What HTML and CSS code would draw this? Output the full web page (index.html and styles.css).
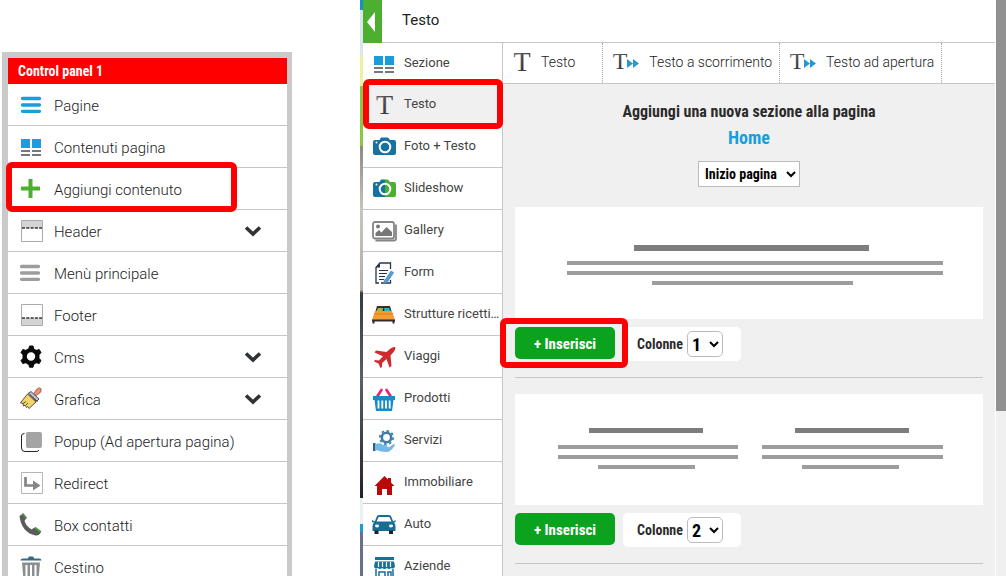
FILE: index.html
```html
<!DOCTYPE html>
<html lang="it">
<head>
<meta charset="utf-8">
<title>Control panel</title>
<link rel="stylesheet" href="styles.css">
</head>
<body>
<div class="page">
  <nav class="control-panel">
    <h2 class="panel-title">Control panel 1</h2>
    <ul class="menu">
      <li><a href="#"><svg class="icon" viewBox="0 0 26 26"><path d="M4.500 6.500h17M4.500 13h17M4.500 19.300h17" stroke="#179edb" stroke-width="3.300" stroke-linecap="round"/></svg><span>Pagine</span></a></li>
      <li><a href="#"><svg class="icon" viewBox="0 0 26 26"><path d="M3 5h9v9H3zM14 5h9v9h-9z" fill="#179edb"/><path d="M3 17h9M14 17h9M3 21h9M14 21h9" stroke="#777" stroke-width="2"/></svg><span>Contenuti pagina</span></a></li>
      <li class="marked marked-add"><a href="#"><svg class="icon" viewBox="0 0 26 26"><path d="M3 12.500h19M12.500 3v19" stroke="#4caf2f" stroke-width="4"/></svg><span>Aggiungi contenuto</span></a></li>
      <li><a href="#"><svg class="icon" viewBox="0 0 26 26"><path d="M3.500 2.500h21v21h-21z" fill="#fff" stroke="#aaa"/><path d="M4 3h20v7H4z" fill="#d4d4d4"/><path d="M4 10h20" stroke="#333" stroke-width="1.500" stroke-dasharray="3 1.300"/></svg><span>Header</span><svg class="chevron" viewBox="0 0 18 12"><path d="M2 2.500l7 6.500 7-6.500" fill="none" stroke="#2f3335" stroke-width="3.600"/></svg></a></li>
      <li><a href="#"><svg class="icon" viewBox="0 0 26 26"><path d="M3.500 6.500h17M3.500 13h17M3.500 19.300h17" stroke="#9d9d9d" stroke-width="3.300" stroke-linecap="round"/></svg><span>Menù principale</span></a></li>
      <li><a href="#"><svg class="icon" viewBox="0 0 26 26"><path d="M3.500 2.500h21v21h-21z" fill="#fff" stroke="#aaa"/><path d="M4 16h20v7H4z" fill="#d4d4d4"/><path d="M4 16h20" stroke="#333" stroke-width="1.500" stroke-dasharray="3 1.300"/></svg><span>Footer</span></a></li>
      <li><a href="#"><svg class="icon" viewBox="0 0 26 26"><circle cx="13" cy="12.500" r="6.400" fill="none" stroke="#0a0a0a" stroke-width="4.400"/><path d="M10.800 5l.7-3h3.500l.7 3zM10.800 20l.7 3.200h3.500l.7-3.200zM18 6.500l3.200-1 1.800 3.200-2.400 2.400zM20.600 14l2.400 2.400-1.800 3.200-3.200-1zM8 6.500l-3.200-1L3 8.700l2.400 2.400zM5.400 14L3 16.400l1.800 3.200 3.200-1z" fill="#0a0a0a" stroke="#0a0a0a" stroke-linejoin="round"/></svg><span>Cms</span><svg class="chevron" viewBox="0 0 18 12"><path d="M2 2.500l7 6.500 7-6.500" fill="none" stroke="#2f3335" stroke-width="3.600"/></svg></a></li>
      <li><a href="#"><svg class="icon" viewBox="0 0 26 26"><path d="M15.500 8l3-4.500q3.500-3 4.500-.5 1 3-2 4.500L17.500 10z" fill="#ee8d78" stroke="#8c5147" stroke-width=".8"/><path d="M10 7.500l3-2 8 7.500-2.500 2.500z" fill="#bcc3ca" stroke="#3c4146" stroke-width=".9"/><path d="M9.500 8l8.500 8-7 6.500-1.500-2-1 1-1.500-2.500L5.500 20 5 17.500l-2.500-.7z" fill="#f3d46a" stroke="#4a4437" stroke-width=".9"/><path d="M11.500 8l8 7.500M5 17.500l3-2M8 19l2-2" stroke="#444" stroke-width=".9"/></svg><span>Grafica</span><svg class="chevron" viewBox="0 0 18 12"><path d="M2 2.500l7 6.500 7-6.500" fill="none" stroke="#2f3335" stroke-width="3.600"/></svg></a></li>
      <li><a href="#"><svg class="icon" viewBox="0 0 26 26"><rect x="8" y="4" width="16" height="16" rx="2" fill="#a4a4a4"/><path d="M6.500 5.500Q3.500 5.500 3.500 8v12q0 3.500 3.500 3.500h11q2.500 0 3-1.500" fill="none" stroke="#222"/></svg><span>Popup (Ad apertura pagina)</span></a></li>
      <li><a href="#"><svg class="icon" viewBox="0 0 26 26"><path d="M3.500 2.500h21v21h-21z" fill="#fff" stroke="#b5b5b5"/><path d="M7.500 7v8.500H16" fill="none" stroke="#858585" stroke-width="2.700"/><path d="M15 10.500l7.500 5-7.500 5z" fill="#858585"/></svg><span>Redirect</span></a></li>
      <li><a href="#"><svg class="icon" viewBox="0 0 26 26"><path d="M1.500 4L5 1.500 8.500 6 6.500 9q2 5.500 7 8.500l3-2 6.500 4.500q-2 4-5.500 3.500Q3.500 20.500 1.500 4z" fill="#5b5b5b"/><path d="M4.500 1.500l4 4.500M17 15.500l6 4.500" stroke="#4c9d43" stroke-width="1.700"/></svg><span>Box contatti</span></a></li>
      <li><a href="#"><svg class="icon" viewBox="0 0 26 26"><path d="M2.500 6.500q0-2 3-2h4.500q0-2 1.500-2h3q1.500 0 1.500 2H21q2.500 0 2.500 2z" fill="#376a80"/><path d="M4 8.500h18L20.500 26h-15z" fill="#8b8f92"/><path d="M8.500 11v15M13 11v15M17.500 11v15" stroke="#fff" stroke-width="2"/></svg><span>Cestino</span></a></li>
    </ul>
  </nav>

  <div class="backdrop"></div>

  <main class="editor">
    <header class="editor-head">
      <button class="back" type="button" aria-label="Indietro"><svg viewBox="0 0 8 20"><path d="M8 0v20L0 10z" fill="#fff"/></svg></button>
      <h1>Testo</h1>
    </header>
    <div class="editor-body">
      <ul class="menu categories">
        <li><a href="#"><svg class="icon" viewBox="0 0 26 26"><path d="M3 6h9v9H3zM14 6h9v9h-9z" fill="#179edb"/><path d="M3 18h9M14 18h9M3 22h9M14 22h9" stroke="#777" stroke-width="2"/></svg><span>Sezione</span></a></li>
        <li class="marked marked-text"><a href="#"><svg class="icon" viewBox="0 0 26 26" aria-hidden="true"><text class="serif-t" x="13.500" y="22" font-size="28" text-anchor="middle">T</text></svg><span>Testo</span></a></li>
        <li><a href="#"><svg class="icon" viewBox="0 0 26 26"><path d="M4 6h4.500L10 3.500h7L19 6h4q2 0 2 2v11q0 2-2 2H4q-2 0-2-2V8q0-2 2-2z" fill="#16739f"/><circle cx="14" cy="13" r="5.300" fill="none" stroke="#fff" stroke-width="2"/><circle cx="5.500" cy="8.500" r="1" fill="#fff"/></svg><span>Foto + Testo</span></a></li>
        <li><a href="#"><svg class="icon" viewBox="0 0 26 26"><path d="M14 3.500h-4L8.500 6H4Q2 6 2 8v11q0 2 2 2h10z" fill="#16739f"/><path d="M14 3.500h3L19 6h4q2 0 2 2v11q0 2-2 2h-9z" fill="#4caf2f"/><circle cx="14" cy="13" r="5.300" fill="none" stroke="#fff" stroke-width="2"/><circle cx="5.500" cy="8.500" r="1" fill="#fff"/></svg><span>Slideshow</span></a></li>
        <li><a href="#"><svg class="icon" viewBox="0 0 26 26"><path d="M4.500 22.500H23q2 0 2-2V6.500" fill="none" stroke="#858585" stroke-width="1.800"/><rect x="2" y="4" width="21" height="16.500" rx="2" fill="#fff" stroke="#858585" stroke-width="1.800"/><circle cx="7" cy="8.500" r="2" fill="#777"/><path d="M4.500 18v-3l3.500-3 2.500 2.500L15.500 9l5.500 5v4z" fill="#777"/></svg><span>Gallery</span></a></li>
        <li><a href="#"><svg class="icon" viewBox="0 0 26 26"><path d="M19.500 9V3H9L5 7.500V23h3M10 23h9.500v-3" fill="none" stroke="#273451" stroke-width="1.300"/><path d="M4.500 7.500L9 2.500v5z" fill="#273451"/><path d="M8 10.500h9M8 13.500h8M8 16.500h6M8 19.500h5" stroke="#273451" stroke-width="1.200"/><path d="M15 21.500l6.500-10" stroke="#5c9bd2" stroke-width="4"/><path d="M13 19l3.500 2.500-4 2z" fill="#5c9bd2"/></svg><span>Form</span></a></li>
        <li><a href="#"><svg class="icon" viewBox="0 0 26 26"><path d="M6 4h13l2 7H4z" fill="#3c2d2c"/><path d="M7 6h5l-.5 3H5.500z" fill="#8cc43e"/><path d="M13 6h5l1.500 3h-6z" fill="#3aa9c8"/><path d="M4 9h17L24 18H1z" fill="#f49b31"/><path d="M3 12h19" stroke="#dd7f1d"/><path d="M1 17.500h23v2H1z" fill="#382a2a"/><path d="M1.500 19h2v2.500h-2zM21.500 19h2v2.500h-2z" fill="#382a2a"/></svg><span>Strutture ricetti…</span></a></li>
        <li><a href="#"><svg class="icon" viewBox="0 0 26 26"><path d="M24 3q-2-.5-4.500 1.500L15.500 8 5 6.500 3.500 8.500l8.500 3.700-4 4.300-4-.5L3 17.500l4.500 2 2 4.500 1.500-1 .2-4L15.500 15l3 8.500 2-1.500-1-10.500L23 7.500Q25 4.500 24 3z" fill="#cf2b2c"/></svg><span>Viaggi</span></a></li>
        <li><a href="#"><svg class="icon" viewBox="0 0 26 26"><path d="M6.500 10L10.500 4M19.500 10L15.500 4" stroke="#e8247f" stroke-width="2.700" stroke-linecap="round"/><path d="M2 10h22v4h-1.500L21 25H5L3.500 14H2z" fill="#168bc8"/><path d="M7.500 14.500v8M11.300 14.500v8M15 14.500v8M18.700 14.500v8" stroke="#fff" stroke-width="1.800"/></svg><span>Prodotti</span></a></li>
        <li><a href="#"><svg class="icon" viewBox="0 0 26 26"><circle cx="15.500" cy="9.500" r="4.700" fill="none" stroke="#407ca8" stroke-width="2.600"/><circle cx="15.500" cy="9.500" r="6.700" fill="none" stroke="#407ca8" stroke-width="1.700" stroke-dasharray="2.500 2.750"/><path d="M2 15h2.500v8H2z" fill="#286388"/><path d="M5 16q4-2 7 1h4q1.500 1-.5 2h3l4-3q2 0 1 2-4 6-8 6-6 0-10.500-2z" fill="#72b9e8"/></svg><span>Servizi</span></a></li>
        <li><a href="#"><svg class="icon" viewBox="0 0 26 26"><path d="M3.500 16L13.500 6l3.500 3.500V8h3v4.500l3.500 3.500H21v9h-5v-6h-5v6H6v-9z" fill="#b80808"/></svg><span>Immobiliare</span></a></li>
        <li><a href="#"><svg class="icon" viewBox="0 0 26 26"><path d="M4.500 10l2-5Q7 4 9 4h8q2 0 2.500 1l2 5" fill="none" stroke="#166f93" stroke-width="1.800"/><path d="M1 8l3 1.500h18L24.500 8v2l-1.500.5q1.500 1.500 1.500 4V19h-23v-4.500Q1.500 12 3 10.500L1 10z" fill="#166f93"/><path d="M3.500 18.500h4v3.500h-4zM18 18.500h4v3.500h-4z" fill="#1d2224"/><ellipse cx="6" cy="14" rx="2" ry="1.400" fill="#fff"/><ellipse cx="20" cy="14" rx="2" ry="1.400" fill="#fff"/></svg><span>Auto</span></a></li>
        <li><a href="#"><svg class="icon" viewBox="0 0 26 26"><path d="M4 3h19v3H4z" fill="#166f9f"/><path d="M4 7.500h19l1 5q-1 3-4 1.500-2 2-4 0-2.500 2-5 0-2 2-4 0-3.500 1.500-4-1.500z" fill="#166f9f"/><path d="M7.500 8v5M11.500 8v5M15.500 8v5M19.500 8v5" stroke="#fff" stroke-width="1.200"/><path d="M5 15v11M22 15v11M8 18h6v5H8zM17 26v-8h3v8" fill="none" stroke="#166f9f" stroke-width="1.500"/></svg><span>Aziende</span></a></li>
      </ul>

      <section class="workspace">
        <nav class="tabs">
          <a href="#"><svg class="tab-icon tab-icon-small" viewBox="0 0 20 26" aria-hidden="true"><text class="serif-t" x="9" y="22" font-size="28" text-anchor="middle">T</text></svg>Testo</a>
          <a href="#"><svg class="tab-icon" viewBox="0 0 28 26" aria-hidden="true"><text class="serif-t" x="7" y="20" font-size="24" text-anchor="middle">T</text><path d="M14 10l6 4.500-6 4.500zM20 10l6 4.500-6 4.500z" fill="#2899cf"/></svg>Testo a scorrimento</a>
          <a href="#"><svg class="tab-icon" viewBox="0 0 28 26" aria-hidden="true"><text class="serif-t" x="7" y="20" font-size="24" text-anchor="middle">T</text><path d="M14 10l6 4.500-6 4.500zM20 10l6 4.500-6 4.500z" fill="#2899cf"/></svg>Testo ad apertura</a>
        </nav>
        <div class="content">
          <div class="intro">
            <label for="position">Aggiungi una nuova sezione alla pagina</label>
            <a href="#">Home</a>
            <select id="position" class="position"><option>Inizio pagina</option></select>
          </div>
          <article class="layout">
            <svg class="preview" viewBox="0 0 468 112"><path d="M119 38h235v6H119z" fill="#7d7d7d"/><path d="M52 54h376v4H52zM52 64h376v4H52zM137 74h201v4H137z" fill="#9d9d9d"/></svg>
            <div class="actions">
              <div class="marked marked-insert"><button class="insert" type="button">+ Inserisci</button></div>
              <div class="columns"><label for="columns-1">Colonne</label><select id="columns-1"><option>1</option></select></div>
            </div>
          </article>
          <article class="layout">
            <svg class="preview" viewBox="0 0 468 111"><path d="M74 34h114v5H74zM280 34h114v5H280z" fill="#7d7d7d"/><path d="M43 51h180v4H43zM43 61h180v4H43zM83 71h97v4H83zM247 51h181v4H247zM247 61h181v4H247zM287 71h97v4h-97z" fill="#9d9d9d"/></svg>
            <div class="actions">
              <div><button class="insert" type="button">+ Inserisci</button></div>
              <div class="columns"><label for="columns-2">Colonne</label><select id="columns-2"><option>2</option></select></div>
            </div>
          </article>
        </div>
      </section>
    </div>
  </main>
  <div class="scroll-track"><div class="scroll-thumb"></div></div>
</div>
<svg class="defs" width="0" height="0"><defs><linearGradient id="ink" x1="0" y1="0" x2="1" y2="1"><stop offset="0" stop-color="#777"/><stop offset="1" stop-color="#1c1c1c"/></linearGradient></defs></svg>
</body>
</html>
```
FILE: styles.css
```css
* { box-sizing: border-box; }
body {
  margin: 0;
  background: #fff;
  color: #222;
  font-family: Roboto, "Liberation Sans", sans-serif;
  overflow: hidden;
}
h1, h2, ul { margin: 0; padding: 0; }
a { color: inherit; text-decoration: none; }
button { border: 0; cursor: pointer; }
.defs { position: absolute; }

.page { display: flex; height: 100vh; overflow: hidden; }

.control-panel {
  flex: 0 0 290px;
  align-self: flex-start;
  margin: 52px 68px 0 2px;
  border: 6px solid #cacaca;
  border-right-width: 5px;
}
.panel-title {
  padding-left: 10px;
  background: #f00;
  color: #fff;
  font: bold 14px/26px "Roboto Condensed", Roboto, sans-serif;
}

.menu { list-style: none; }
.menu li { border-bottom: 1px solid #c6c6c6; }
.menu a {
  display: flex;
  align-items: center;
  gap: 10px;
  height: 41px;
  padding: 0 25px 0 10px;
  font-size: 15px;
  font-weight: 300;
  white-space: nowrap;
}
.menu span {
  flex: 1;
  min-width: 0;
  padding-top: 2px;
  line-height: 20px;
}
.icon { flex: none; width: 26px; height: 26px; overflow: visible; }
.chevron { width: 18px; height: 12px; }
.serif-t { font-family: "Liberation Serif", serif; fill: url(#ink); }

.marked { position: relative; }
.marked::after {
  content: "";
  position: absolute;
  z-index: 2;
  border: 6px solid #f00;
  border-radius: 6px;
  pointer-events: none;
}
.marked-add::after { inset: -6px 50px -3px -2px; }
.marked-text::after { inset: -5px -1px -4px 0; }
.marked-insert::after { inset: -9px -13px -7px -15px; }

.backdrop {
  flex: 0 0 3px;
  background: linear-gradient(#178fc8 0 10px, #dbe6e8 10px 55px, #eef0a0 55px 86px, #8dc641 86px 146px, #92877c 146px, #c8c4bd 210px, #b5aea5 290px, #343a47 293px, #59606c 380px, #20232a 498px, #e8f2f1 498px 524px, #189fd5 524px 532px, #65708f 532px);
}

.editor { flex: 1; min-width: 0; display: flex; flex-direction: column; }
.editor-head {
  flex: none;
  display: flex;
  align-items: center;
  height: 43px;
  gap: 20px;
  border-bottom: 1px solid #c6c6c6;
}
.editor-head h1 { padding-bottom: 2px; font-size: 15px; font-weight: 400; }
.back {
  align-self: stretch;
  width: 19px;
  margin-bottom: -1px;
  padding: 0;
  background: #4caf2f;
}
.back svg { display: block; width: 8px; height: 20px; margin: 0 auto 0 4px; }

.editor-body { flex: 1; min-height: 0; display: flex; }
.categories { flex: 0 0 140px; min-width: 0; border-right: 1px solid #c6c6c6; }
.categories a { gap: 7px; padding: 0 0 0 8px; font-size: 13px; font-weight: 400; color: #444; }
.categories li:first-child a { height: 40px; }
.categories span { padding: 0 0 1px; }
.categories .marked-text { background: #f0f0f0; }

.workspace { flex: 1; min-width: 0; background: #f0f0f0; }
.tabs { display: flex; height: 41px; background: #fff; border-bottom: 1px solid #c6c6c6; }
.tabs a {
  display: flex;
  align-items: center;
  gap: 8px;
  padding: 0 7px 2px 10px;
  border-right: 1px dotted #aaa;
  font-size: 14px;
  font-weight: 300;
  white-space: nowrap;
}
.tabs a:first-child { padding-right: 27px; }
.tab-icon { width: 28px; height: 26px; overflow: visible; }
.tab-icon-small { width: 20px; }

.content {
  padding: 16px 12px 0;
  color: #2b2b2b;
  font-family: "Roboto Condensed", Roboto, sans-serif;
  font-weight: bold;
}
.intro {
  display: flex;
  flex-direction: column;
  align-items: center;
  margin-bottom: 20px;
  font-size: 16px;
  line-height: 24px;
}
.intro a { padding-top: 2px; margin-bottom: 11px; color: #179edb; font-size: 18px; line-height: 24px; }
select { font: inherit; color: #000; background-color: #fff; border: 1px solid #bbb; }
.position { width: 102px; height: 26px; padding: 0 2px; font-size: 14px; }

.layout { padding-bottom: 16px; margin-bottom: 16px; border-bottom: 1px solid #c6c6c6; }
.preview { display: block; width: 100%; background: #fff; margin-bottom: 8px; }
.actions { display: flex; gap: 8px; height: 34px; }
.insert {
  width: 100px;
  height: 32px;
  border-radius: 5px;
  background: #0ba31e;
  color: #fff;
  font: bold 15px/32px "Roboto Condensed", Roboto, sans-serif;
}
.columns {
  display: flex;
  align-items: center;
  gap: 4px;
  width: 118px;
  padding-left: 14px;
  border-radius: 5px;
  background: #fff;
  font-size: 14px;
}
.columns select { width: 36px; height: 26px; border-radius: 5px; font-size: 18px; }

.scroll-track { flex: 0 0 11px; border-left: 1px solid #fff; background: #f0f0f0; }
.scroll-thumb { height: 411px; background: #919191; }
```
